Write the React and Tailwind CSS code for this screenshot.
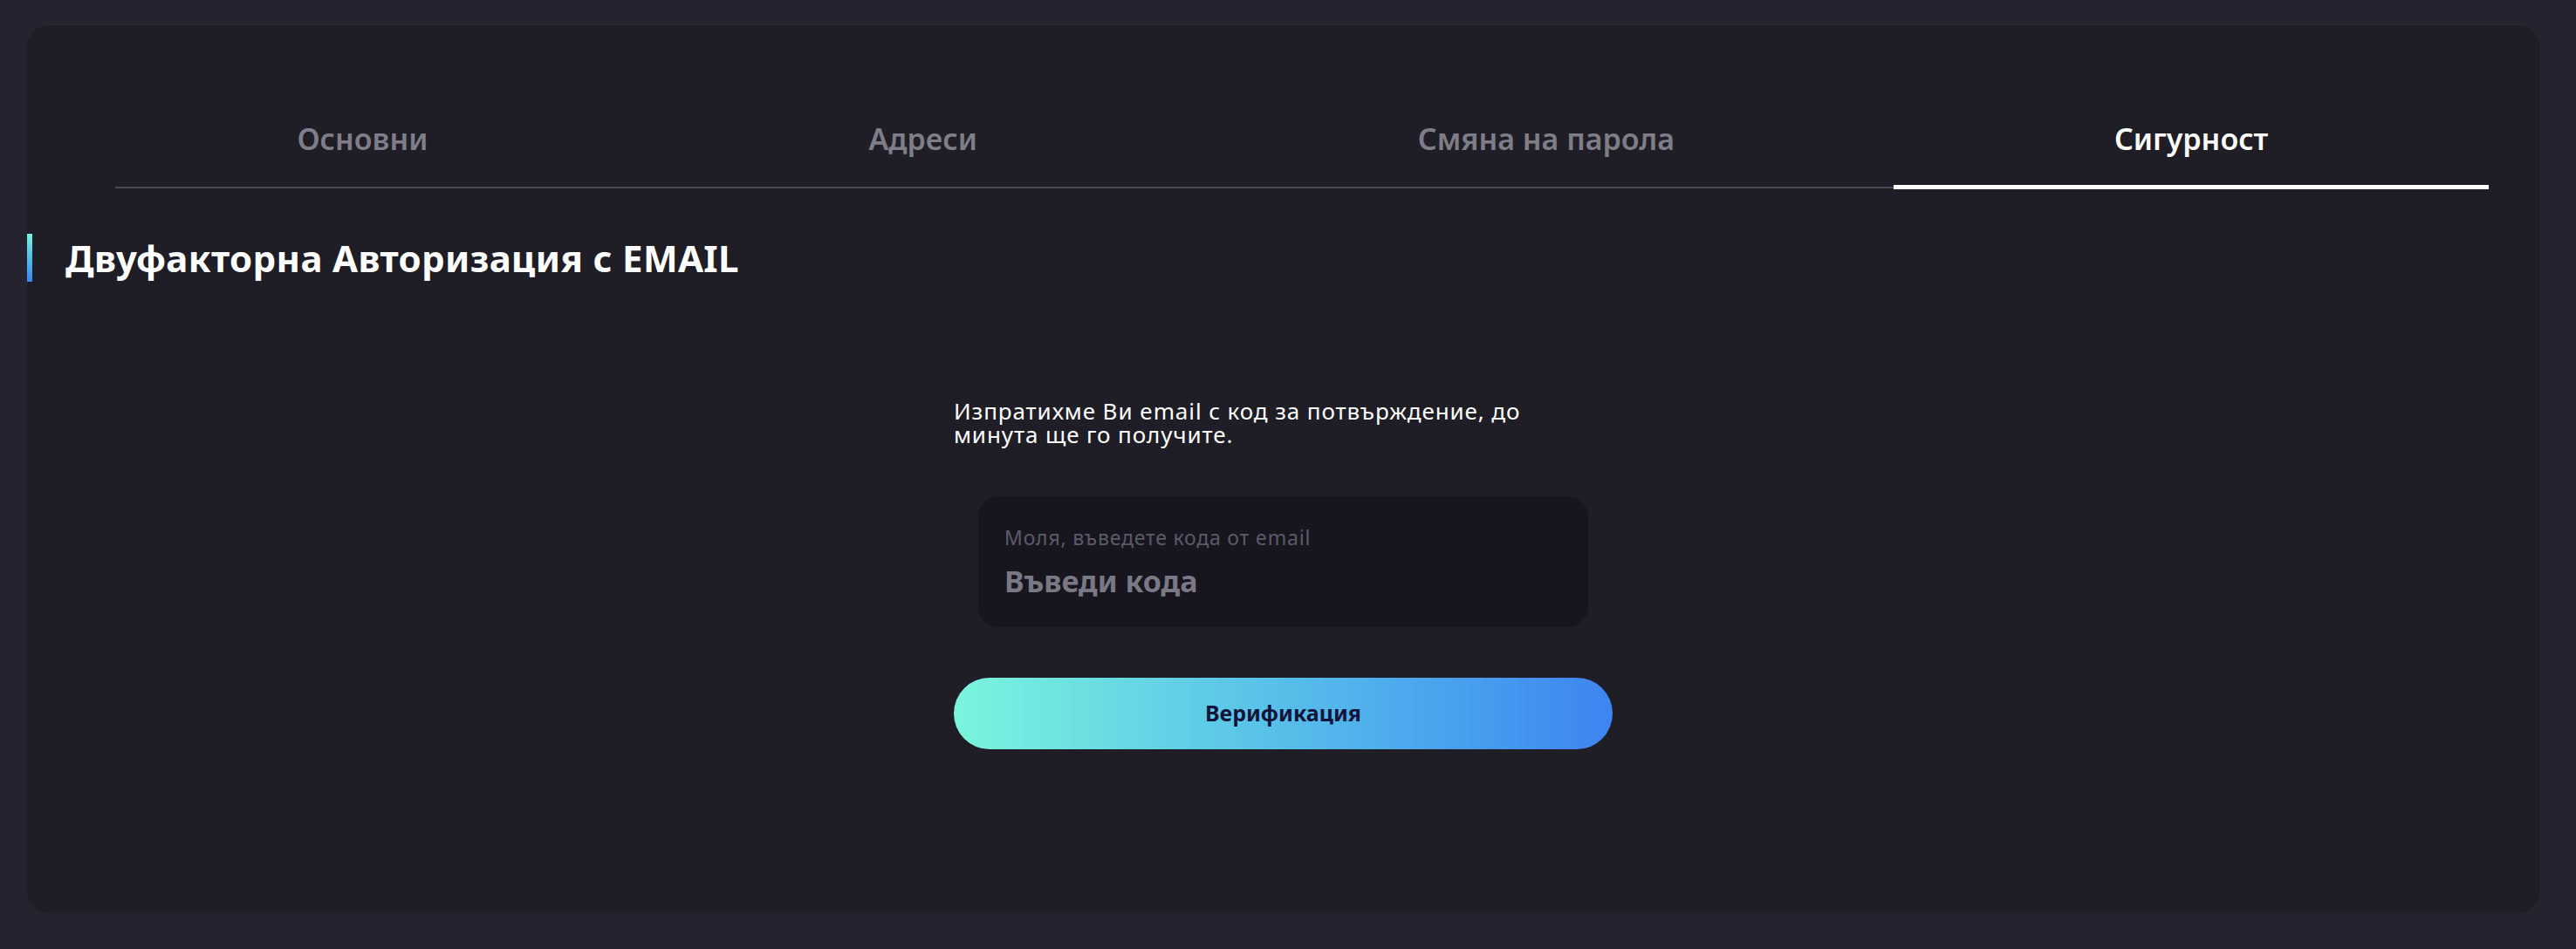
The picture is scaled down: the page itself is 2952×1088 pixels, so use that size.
import React, { useState } from 'react';

const tabs = [
  { id: 'basic', label: 'Основни', w: 'w-[653px]' },
  { id: 'addresses', label: 'Адреси', w: 'w-[632px]' },
  { id: 'password', label: 'Смяна на парола', w: 'w-[797px]' },
  { id: 'security', label: 'Сигурност', w: 'w-[682px]' },
];

export default function App() {
  const [active, setActive] = useState('security');
  const [code, setCode] = useState('');

  return (
    <div className="min-h-screen bg-[#25232f] pt-[29px] pl-[31px] pr-[42px] pb-[41px] font-['Noto_Sans',sans-serif]">
      <div className="h-[1018px] rounded-[25px] bg-[#1f1d26] pt-[102px]">
        {/* tabs */}
        <div className="relative mx-[58px] flex">
          <div className="absolute left-[43px] right-0 bottom-[1px] h-[2px] bg-[#4a4852]" />
          {tabs.map(t => (
            <button
              key={t.id}
              onClick={() => setActive(t.id)}
              className={`${t.w} relative flex flex-col items-center`}
            >
              <span className={`text-[34px] leading-[56px] font-semibold ${active === t.id ? 'text-white' : 'text-[#7f7d87]'}`}>
                {t.label}
              </span>
              <span className={`mt-[25px] h-[5px] w-full ${active === t.id ? 'bg-white' : 'bg-transparent'}`} />
            </button>
          ))}
        </div>

        {/* section title */}
        <div className="mt-[51px] flex items-center gap-[38px]">
          <div className="h-[55px] w-[6px] bg-linear-to-b from-[#79f2dc] to-[#3b86f2]" />
          <h2 className="text-[42px] leading-[55px] font-bold tracking-[0.35px] text-white">Двуфакторна Авторизация с EMAIL</h2>
        </div>

        {/* verification form */}
        <div className="mx-auto mt-[135px] w-[755px]">
          <p className="max-w-[700px] text-[26px] leading-[27px] tracking-[0.9px] text-white">
            Изпратихме Ви email с код за потвърждение, до минута ще го получите.
          </p>

          <label className="mx-[28px] mt-[57px] flex h-[150px] flex-col rounded-[24px] bg-[#17161f] px-[30px] pt-[32px]">
            <span className="text-[23px] leading-[30px] tracking-[0.8px] text-[#5c5a68]">Моля, въведете кода от email</span>
            <input
              value={code}
              onChange={e => setCode(e.target.value)}
              placeholder="Въведи кода"
              className="mt-[15px] bg-transparent text-[34px] leading-[40px] font-bold text-white outline-none placeholder:text-[#7a7885]"
            />
          </label>

          <button className="mt-[58px] h-[82px] w-full rounded-full bg-linear-to-r from-[#7af5db] to-[#3f84f0] text-[25px] font-bold text-[#13143a]">
            Верификация
          </button>
        </div>
      </div>
    </div>
  );
}
